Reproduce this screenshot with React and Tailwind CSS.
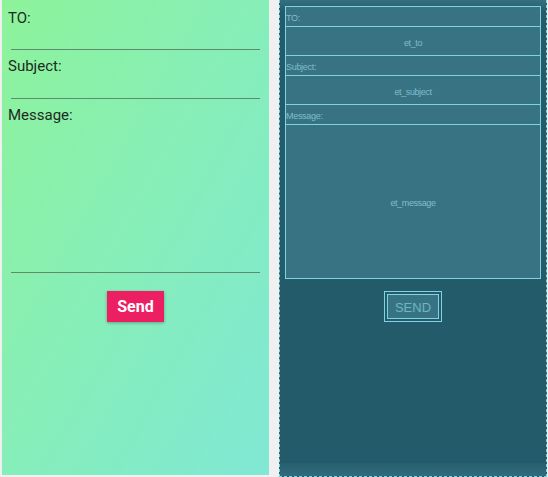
export default function App() {
  return (
    <div className="w-[548px] h-[477px] bg-[#f0f0f0] flex overflow-hidden">
      {/* DESIGN PREVIEW */}
      <div
        className="ml-[2px] w-[267px] h-[475px] bg-linear-to-br from-[#8df39a] to-[#80e8d4] flex flex-col"
        style={{ fontFamily: "Roboto, 'Noto Sans', sans-serif" }}
      >
        <div className="mt-[8px] pl-[6px] h-[20px] leading-[20px] text-[15px] text-[#1f2a22]">TO:</div>
        <div className="mx-[9px] h-[22px] border-b border-[#5e8b6c]" />

        <div className="mt-[6px] pl-[6px] h-[20px] leading-[20px] text-[15px] text-[#1f2a22]">Subject:</div>
        <div className="mx-[9px] h-[23px] border-b border-[#5e8b6c]" />

        <div className="mt-[6px] pl-[6px] h-[20px] leading-[20px] text-[15px] text-[#1f2a22]">Message:</div>
        <div className="mx-[9px] h-[148px] border-b border-[#5e8b6c]" />

        <div className="mt-[18px] flex justify-center">
          <button className="w-[57px] h-[31px] bg-[#ec1f63] text-white font-bold text-[16px] shadow-[0_1px_3px_rgba(0,0,0,0.3)]">
            Send
          </button>
        </div>
      </div>

      {/* BLUEPRINT */}
      <div
        className="ml-[10px] w-[268px] h-[477px] bg-[#235b6b] border-l border-r border-b border-dashed border-[#7fd3e3] flex flex-col relative"
        style={{ fontFamily: "'Liberation Sans', Arial, sans-serif" }}
      >
        <div className="absolute top-0 left-0 right-0 h-[12px] bg-linear-to-b from-[#347082] to-[#235b6b]" />
        <div className="absolute bottom-0 left-0 right-0 h-[13px] bg-linear-to-b from-[#265f6f] to-[#326c7c]" />

        <div className="relative mt-[6px] ml-[5px] w-[256px] h-[273px] bg-[#387384] border border-[#7fd3e3] flex flex-col text-[#7fbdcb]">
          <div className="h-[20px] border-b border-[#7fd3e3] text-[9px] tracking-[-0.3px] flex items-center pt-[5px]">TO:</div>
          <div className="h-[29px] border-b border-[#7fd3e3] text-[9px] tracking-[-0.4px] flex items-center justify-center pt-[5px]">et_to</div>
          <div className="h-[20px] border-b border-[#7fd3e3] text-[9px] tracking-[-0.3px] flex items-center pt-[5px]">Subject:</div>
          <div className="h-[29px] border-b border-[#7fd3e3] text-[9px] tracking-[-0.4px] flex items-center justify-center pt-[5px]">et_subject</div>
          <div className="h-[20px] border-b border-[#7fd3e3] text-[9px] tracking-[-0.3px] flex items-center pt-[5px]">Message:</div>
          <div className="flex-1 text-[9px] tracking-[-0.4px] flex items-center justify-center pt-[4px]">et_message</div>
        </div>

        <div className="relative mt-[12px] flex justify-center">
          <div className="w-[58px] h-[31px] border border-[#7fd3e3] p-[2px]">
            <div className="w-full h-full border border-[#7fd3e3] bg-[#387384] flex items-center justify-center pt-[2px] text-[13px] text-[#6cb6c6]">
              SEND
            </div>
          </div>
        </div>
      </div>
    </div>
  );
}
